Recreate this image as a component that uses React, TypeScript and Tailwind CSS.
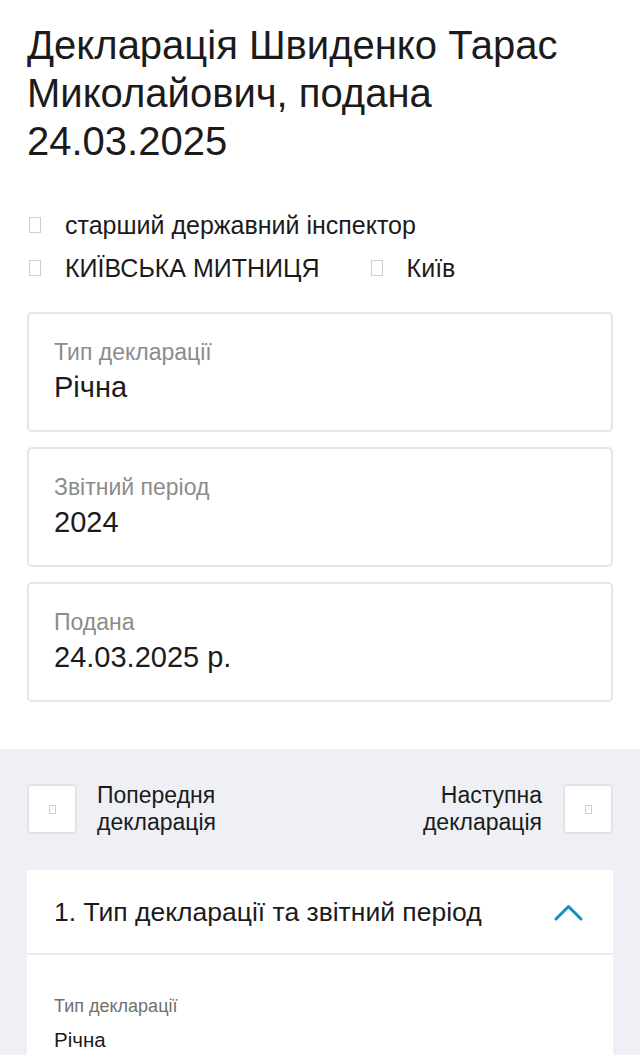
import React from "react";

const Tofu = ({ className = "" }: { className?: string }) => (
  <span className={"inline-block shrink-0 border border-[#cfcfcf] bg-white " + className} />
);

const Card = ({ label, value }: { label: string; value: string }) => (
  <div className="h-[120px] rounded-[5px] border-2 border-[#e6e6e6] bg-white px-[25px] pt-[24px]">
    <div className="text-[23px] leading-[28px] text-[#8c8c8c]">{label}</div>
    <div className="mt-[4px] text-[29px] leading-[34px] text-[#1b1b1b]">{value}</div>
  </div>
);

export default function App() {
  return (
    <div className="min-h-[1055px] bg-white font-['Liberation_Sans',Arial,sans-serif] text-[#1b1b1b]">
      <div className="px-[27px] pt-[21px] pb-[47px]">
        <h1 className="text-[40px] leading-[48px] font-normal">
          Декларація Швиденко Тарас Миколайович, подана 24.03.2025
        </h1>
        <div className="mt-[45px] flex flex-col gap-[13px] text-[25px] leading-[30px]">
          <div className="flex items-center">
            <Tofu className="ml-[2px] h-[16px] w-[12px]" />
            <span className="ml-[24px]">старший державний інспектор</span>
          </div>
          <div className="flex items-center">
            <Tofu className="ml-[2px] h-[16px] w-[12px]" />
            <span className="ml-[24px]">КИЇВСЬКА МИТНИЦЯ</span>
            <Tofu className="ml-[51px] h-[16px] w-[12px]" />
            <span className="ml-[24px]">Київ</span>
          </div>
        </div>
        <div className="mt-[29px] flex flex-col gap-[15px]">
          <Card label="Тип декларації" value="Річна" />
          <Card label="Звітний період" value="2024" />
          <Card label="Подана" value="24.03.2025 р." />
        </div>
      </div>
      <div className="bg-[#eef0f5] px-[27px] pt-[33px] pb-[20px]">
        <div className="flex items-center justify-between">
          <div className="flex items-center">
            <div className="flex h-[50px] w-[50px] items-center justify-center rounded-[5px] border-2 border-[#e2e3e6] bg-white">
              <Tofu className="h-[9px] w-[7px]" />
            </div>
            <div className="ml-[20px] text-[23px] leading-[27px]">
              Попередня
              <br />
              декларація
            </div>
          </div>
          <div className="flex items-center">
            <div className="mr-[21px] text-right text-[23px] leading-[27px]">
              Наступна
              <br />
              декларація
            </div>
            <div className="flex h-[50px] w-[50px] items-center justify-center rounded-[5px] border-2 border-[#e2e3e6] bg-white">
              <Tofu className="h-[9px] w-[7px]" />
            </div>
          </div>
        </div>
        <div className="mt-[34px] bg-white">
          <div className="flex h-[85px] items-center justify-between border-b-2 border-[#eaebee] pl-[27px] pr-[30px]">
            <span className="text-[26.5px] leading-[32px]">1. Тип декларації та звітний період</span>
            <svg width="29" height="18" viewBox="0 0 29 18" fill="none">
              <path d="M2 16 L14.5 3.5 L27 16" stroke="#1b8bc6" strokeWidth="3" strokeLinecap="round" strokeLinejoin="round" />
            </svg>
          </div>
          <div className="px-[27px] pt-[39px] pb-[20px]">
            <div className="text-[18px] leading-[24px] text-[#6f6f6f]">Тип декларації</div>
            <div className="mt-[9px] text-[20.5px] leading-[26px]">Річна</div>
          </div>
        </div>
      </div>
    </div>
  );
}
